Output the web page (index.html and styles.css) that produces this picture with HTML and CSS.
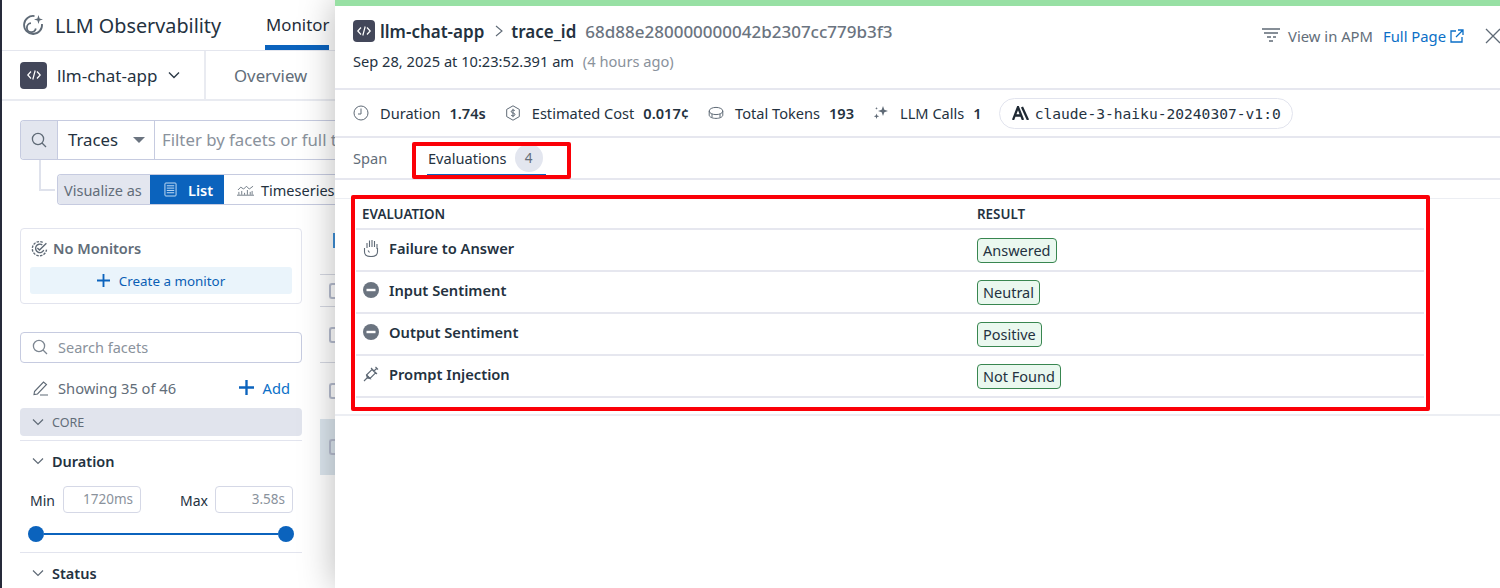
FILE: index.html
```html
<!DOCTYPE html>
<html lang="en">
<head>
<meta charset="utf-8">
<title>LLM Observability</title>
<link rel="stylesheet" href="styles.css">
</head>
<body>
<div class="page">
  <div class="app">
    <header class="top">
      <svg class="i-logo" viewBox="0 0 22 22" fill="none" stroke="#5f6a76" stroke-width="1.8"><path d="M12.500 2.100A9 9 0 1 0 20 10"/><path d="M9 9.200a4.500 4.500 0 1 0 4.800 5.300" stroke-width="1.800"/><path d="M16.500 1l1.100 3.400L21 5.500l-3.400 1.100L16.500 10l-1.100-3.400L12 5.500l3.400-1.100z" fill="#5f6a76" stroke="none"/></svg>
      <span class="top-title">LLM Observability</span>
      <span class="top-tab">Monitor</span>
    </header>
    <div class="appbar">
      <div class="app-pick">
        <span class="code-badge big"><svg viewBox="0 0 16 16" fill="none" stroke="#fff" stroke-width="1.2"><path d="M5 4.500L1.800 8 5 11.500M11 4.500L14.200 8 11 11.500M9.200 3.500L6.800 12.500"/></svg></span>
        <span class="app-name">llm-chat-app</span>
        <svg class="i-chev" viewBox="0 0 12 8" fill="none" stroke="#2c3a47" stroke-width="1.4"><path d="M1 1.500l5 5 5-5"/></svg>
      </div>
      <span class="overview">Overview</span>
    </div>
    <section class="query">
      <div class="searchbar">
        <span class="mag-cell"><svg class="i-mag" viewBox="0 0 16 16" fill="none" stroke="#5f6a76" stroke-width="1.3"><circle cx="7" cy="7" r="5.600"/><path d="M11 11l4 4"/></svg></span>
        <span class="traces">Traces<i class="caret"></i></span>
        <span class="filter">Filter by facets or full text</span>
      </div>
      <div class="viz-row">
        <i class="elbow"></i>
        <div class="viz">
          <span class="viz-label">Visualize as</span>
          <span class="viz-list"><svg class="i-list" viewBox="0 0 14 16" fill="none" stroke="#cfe4f7" stroke-width="1"><rect x="1" y="1" width="12" height="14" rx="1"/><path d="M3 4h8M3 6.500h8M3 9h8M3 11.500h8"/></svg>List</span>
          <span class="viz-ts"><svg class="i-ts" viewBox="0 0 18 12" fill="none" stroke="#5f6a76" stroke-width=".9"><path d="M0 11.500h18M1 6l3-3 3 2 3-3 3 3 4-3"/><path d="M2 11V8M5 11V7M8 11V9M11 11V6M14 11V8M16 11V7"/></svg>Timeseries</span>
        </div>
      </div>
    </section>
    <div class="work">
      <aside class="side">
        <div class="monitors">
          <div class="mon-title"><svg class="i-target" viewBox="0 0 16 16" fill="none" stroke="#5f6a76" stroke-width="1.3"><path d="M11 2.200A6.700 6.700 0 1 0 14.600 9" stroke-dasharray="2.400 1.100"/><path d="M10.600 4.600A4 4 0 1 0 12 9.500"/><path d="M6 7.500l2 2L14.500 3"/></svg>No Monitors</div>
          <div class="mon-btn"><svg class="i-plus" viewBox="0 0 14 14" stroke="#0b63bd" stroke-width="2"><path d="M7 0v14M0 7h14"/></svg>Create a monitor</div>
        </div>
        <div class="facet-search"><svg class="i-mag" viewBox="0 0 16 16" fill="none" stroke="#7d8691" stroke-width="1.3"><circle cx="7" cy="7" r="5.600"/><path d="M11 11l4 4"/></svg>Search facets</div>
        <div class="showing">
          <span class="showing-l"><svg class="i-pen" viewBox="0 0 16 16" fill="none" stroke="#5f6a76" stroke-width="1.1"><path d="M1.500 11.500L10.500 2l3 2.500-9 9.500-3.500.5zM7 15h8"/></svg>Showing 35 of 46</span>
          <span class="add"><svg class="i-plus" viewBox="0 0 14 14" stroke="#0b63bd" stroke-width="2.2"><path d="M7 0v14M0 7h14"/></svg>Add</span>
        </div>
        <div class="core"><svg class="i-down" viewBox="0 0 12 8" fill="none" stroke="#5f6a76" stroke-width="1.2"><path d="M1 1.500l5 5 5-5"/></svg>CORE</div>
        <div class="facet">
          <div class="facet-h"><svg class="i-down" viewBox="0 0 12 8" fill="none" stroke="#5f6a76" stroke-width="1.2"><path d="M1 1.500l5 5 5-5"/></svg>Duration</div>
          <div class="range">
            <span class="range-l">Min</span><span class="range-in">1720ms</span>
            <span class="range-l max">Max</span><span class="range-in">3.58s</span>
          </div>
          <div class="slider"><i class="thumb"></i><i class="track"></i><i class="thumb"></i></div>
        </div>
        <div class="facet status">
          <div class="facet-h"><svg class="i-down" viewBox="0 0 12 8" fill="none" stroke="#5f6a76" stroke-width="1.2"><path d="M1 1.500l5 5 5-5"/></svg>Status</div>
        </div>
      </aside>
      <div class="peek">
        <i class="peek-blue"></i>
        <div class="peek-row r1"><i class="box"></i></div>
        <div class="peek-row r2"><i class="box"></i></div>
        <div class="peek-row r3"><i class="box"></i></div>
        <div class="peek-row r4"><i class="box"></i></div>
      </div>
    </div>
  </div>

  <main class="panel">
    <div class="panel-head">
      <div class="head-main">
        <div class="crumbs">
          <span class="code-badge"><svg viewBox="0 0 16 16" fill="none" stroke="#fff" stroke-width="1.2"><path d="M5 4.500L1.800 8 5 11.500M11 4.500L14.200 8 11 11.500M9.200 3.500L6.800 12.500"/></svg></span>
          <span class="crumb-name">llm-chat-app</span>
          <svg class="i-gt" viewBox="0 0 8 12" fill="none" stroke="#5f6a76" stroke-width="1.1"><path d="M1 1l6 5-6 5"/></svg>
          <span class="crumb-name">trace_id</span>
          <span class="trace-val">68d88e280000000042b2307cc779b3f3</span>
        </div>
        <div class="when">Sep 28, 2025 at 10:23:52.391 am <span class="ago">(4 hours ago)</span></div>
      </div>
      <div class="head-actions">
        <svg class="i-apm" viewBox="0 0 20 16" fill="none" stroke="#5f6a76" stroke-width="1.6"><path d="M1 1h18M3 5h14"/><path d="M6 9h4M12 9h3M8 13h4"/></svg>
        <span class="apm">View in APM</span>
        <span class="full">Full Page<svg class="i-ext" viewBox="0 0 14 14" fill="none" stroke="#0b6fc7" stroke-width="1.3"><path d="M6 2H1v11h11V8M8 1h5v5M13 1L6 8"/></svg></span>
        <svg class="i-x" viewBox="0 0 16 16" fill="none" stroke="#5f6a76" stroke-width="1.3"><path d="M1 1l14 14M15 1L1 15"/></svg>
      </div>
    </div>

    <div class="metrics">
      <span class="metric"><svg class="i-m" viewBox="0 0 16 16" fill="none" stroke="#5f6a76" stroke-width="1"><circle cx="8" cy="8" r="7"/><path d="M8 3.500V9H5"/></svg>Duration<b>1.74s</b></span>
      <span class="metric"><svg class="i-m" viewBox="0 0 16 16" fill="none" stroke="#5f6a76" stroke-width="1"><path d="M8 .8l6.300 3.600v7.200L8 15.200l-6.300-3.600V4.400z"/><path d="M10 5.800C9.500 5 7 4.800 6.300 6c-.6 1.400 1 1.800 1.800 2 1 .2 2.200.6 1.800 2-.5 1.200-3 1.200-3.800.2M8 3.800v8.400"/></svg>Estimated Cost<b>0.017¢</b></span>
      <span class="metric"><svg class="i-m" viewBox="0 0 16 16" fill="none" stroke="#5f6a76" stroke-width="1"><ellipse cx="8" cy="6" rx="6.800" ry="3.600"/><path d="M1.200 6v4c0 2 3 3.400 6.800 3.400s6.800-1.400 6.800-3.400V6M4 9v3.500M12 9v3.500"/></svg>Total Tokens<b>193</b></span>
      <span class="metric last"><svg class="i-m" viewBox="0 0 16 16" fill="#5f6a76"><path d="M10 1l1.300 3.700L15 6l-3.700 1.300L10 11 8.700 7.300 5 6l3.700-1.300zM3.500 8.500l.7 2 2 .7-2 .7-.7 2-.7-2-2-.7 2-.7zM3.500 2l.4 1 1 .4-1 .4-.4 1-.4-1-1-.4 1-.4z"/></svg>LLM Calls<b>1</b></span>
      <span class="model"><svg class="i-anth" viewBox="0 0 18 14" fill="none" stroke="#1f2933" stroke-width="2.300"><path d="M1 14L6 1l5 13M3 9.500h6M10 1l6 13"/></svg>claude-3-haiku-20240307-v1:0</span>
    </div>

    <nav class="tabs">
      <span class="tab">Span</span>
      <span class="tab-on">Evaluations<span class="count">4</span><i class="mark mark-tab"></i></span>
    </nav>

    <section class="evals">
      <i class="mark mark-table"></i>
      <div class="row row-h"><span class="c1">EVALUATION</span><span>RESULT</span></div>
      <div class="row">
        <span class="c1"><svg class="i-e" viewBox="0 0 16 18" fill="none" stroke="#5f6a76" stroke-width="1.100"><path d="M4 9V4M6.500 8V1.500M9 8V1M11.500 8V2M14 10V5M1.500 9v4C1.500 16 4.500 17.500 8 17.500s6.500-1.500 6.500-4.500V9M5 11.500l1.500 2"/></svg>Failure to Answer</span>
        <span class="tag">Answered</span>
      </div>
      <div class="row">
        <span class="c1"><svg class="i-e" viewBox="0 0 16 16"><circle cx="8" cy="8" r="8" fill="#6b7480"/><rect x="3.500" y="6.800" width="9" height="2.400" fill="#fff"/></svg>Input Sentiment</span>
        <span class="tag">Neutral</span>
      </div>
      <div class="row">
        <span class="c1"><svg class="i-e" viewBox="0 0 16 16"><circle cx="8" cy="8" r="8" fill="#6b7480"/><rect x="3.500" y="6.800" width="9" height="2.400" fill="#fff"/></svg>Output Sentiment</span>
        <span class="tag">Positive</span>
      </div>
      <div class="row">
        <span class="c1"><svg class="i-e" viewBox="0 0 16 16" fill="none" stroke="#5f6a76" stroke-width="1.100"><path d="M1 15l3.500-3.500M3.500 9L9 3.500 12.500 7 7 12.500zM8 2l6 6M11 5l3-3M12.500 1l2.500 2.500"/><path d="M3.500 9L7 12.500 4.500 12z" fill="#5f6a76"/></svg>Prompt Injection</span>
        <span class="tag">Not Found</span>
      </div>
    </section>
  </main>
</div>
</body>
</html>
```
FILE: styles.css
```css
* { box-sizing: border-box; }
html, body { margin: 0; height: 100%; overflow: hidden; }
body { font-family: "Noto Sans", sans-serif; color: #1f2d3a; background: #fff; }
svg { display: block; flex: none; }
.page { display: flex; width: 1500px; height: 588px; overflow: hidden; }

/* left application */
.app { width: 335px; flex: none; height: 588px; border-left: 2px solid #262a3a; overflow: hidden; }
.top { height: 51px; display: flex; align-items: center; border-bottom: 1px solid #e4e6ee; white-space: nowrap; }
.i-logo { width: 22px; height: 22px; margin-left: 20px; }
.top-title { font-size: 19.800px; margin-left: 11px; color: #24323f; }
.top-tab { font-size: 16.800px; margin-left: 44px; height: 50px; width: 64px; padding: 13px 0 0 1px; border-bottom: 5px solid #0b63bd; color: #1f2d3a; }
.appbar { height: 50px; display: flex; align-items: center; border-bottom: 2px solid #e9ebf1; }
.app-pick { width: 204px; height: 100%; display: flex; align-items: center; padding-left: 18px; border-right: 2px solid #e9ebf1; flex: none; }
.code-badge { width: 22px; height: 22px; border-radius: 4px; background: #43475a; display: flex; align-items: center; justify-content: center; flex: none; }
.code-badge svg { width: 16px; height: 16px; }
.code-badge.big { width: 27px; height: 27px; }
.app-name { font-size: 17px; margin-left: 10px; color: #24323f; }
.i-chev { width: 12px; height: 8px; margin-left: 11px; }
.overview { font-size: 16.800px; margin: 1px 0 0 28px; color: #626d79; }

.query { padding: 19px 0 0 18px; height: 127px; }
.searchbar { display: flex; height: 40px; border: 1px solid #c6cbe0; border-right: 0; border-radius: 4px 0 0 4px; white-space: nowrap; overflow: hidden; }
.mag-cell { width: 37px; background: #e3e6ef; display: flex; align-items: center; justify-content: center; border-right: 1px solid #c6cbe0; flex: none; }
.i-mag { width: 16px; height: 16px; }
.traces { width: 97px; flex: none; display: flex; align-items: center; padding: 0 0 2px 10px; font-size: 16.800px; border-right: 1px solid #c6cbe0; color: #24323f; }
.caret { margin: 2px 0 0 15px; border: 6px solid transparent; border-top: 6px solid #6b7480; border-bottom: 0; }
.filter { padding: 7px 0 0 7px; font-size: 16.800px; color: #8a929c; }
.viz-row { display: flex; height: 31px; margin-top: 14px; position: relative; white-space: nowrap; }
.elbow { position: absolute; left: 19px; top: -14px; width: 16px; height: 31px; border-left: 2px solid #dfe2ec; border-bottom: 2px solid #dfe2ec; }
.viz { display: flex; margin-left: 37px; flex: 1; border: 1px solid #c6cbe0; border-right: 0; border-radius: 4px 0 0 4px; overflow: hidden; font-size: 14.500px; }
.viz-label { width: 92px; flex: none; background: #e3e6ef; padding: 5px 0 0 6px; color: #626d79; }
.viz-list { width: 74px; flex: none; background: #0b63bd; color: #fff; display: flex; align-items: center; padding-left: 14px; font-weight: 600; }
.i-list { width: 13px; height: 15px; margin-right: 11px; }
.viz-ts { display: flex; align-items: center; padding-left: 13px; color: #24323f; }
.i-ts { width: 17px; height: 12px; margin-right: 7px; }

.work { display: flex; align-items: flex-start; }
.side { width: 282px; flex: none; margin-left: 18px; }
.monitors { height: 76px; border: 1px solid #e2e4ee; border-radius: 4px; padding: 8px 9px 0; }
.mon-title { display: flex; align-items: center; font-size: 14.500px; font-weight: 600; color: #626d79; height: 22px; }
.i-target { width: 17px; height: 17px; margin: 0 5px 0 1px; }
.mon-btn { height: 27px; margin-top: 8px; background: #eaf4fb; border-radius: 3px; display: flex; align-items: center; justify-content: center; font-size: 13.400px; color: #0b5fb5; }
.mon-btn .i-plus { width: 13px; height: 13px; margin-right: 9px; }
.facet-search { height: 31px; margin-top: 28px; border: 1px solid #c6cbe0; border-radius: 4px; display: flex; align-items: center; padding: 0 0 2px 11px; font-size: 14.500px; color: #8a929c; }
.facet-search .i-mag { margin-right: 10px; }
.showing { display: flex; justify-content: space-between; align-items: center; height: 25px; margin-top: 12px; padding: 0 12px 0 13px; font-size: 14.700px; color: #626d79; }
.showing-l { display: flex; align-items: center; }
.i-pen { width: 16px; height: 16px; margin-right: 9px; }
.add { display: flex; align-items: center; color: #0b6fc7; }
.add .i-plus { width: 15px; height: 15px; margin-right: 9px; }
.core { height: 28px; margin-top: 8px; border-radius: 4px; background: #e1e4ed; display: flex; align-items: center; padding-left: 12px; font-size: 12.500px; color: #626d79; }
.i-down { width: 12px; height: 8px; margin-right: 8px; }
.facet { margin-top: 4px; border-top: 1px solid #e2e4ee; height: 112px; padding-top: 8px; }
.facet-h { display: flex; align-items: center; height: 24px; padding-left: 12px; font-size: 14.500px; font-weight: 600; color: #24323f; }
.range { display: flex; align-items: center; margin-top: 13px; padding-left: 10px; font-size: 14px; color: #24323f; }
.range-l { width: 33px; padding-top: 2px; }
.range-l.max { width: 35px; margin-left: 39px; }
.range-in { width: 78px; height: 27px; border: 1px solid #d5d8e6; border-radius: 4px; text-align: right; padding: 3px 7px 0 0; font-size: 13.500px; color: #8a929c; }
.slider { display: flex; align-items: center; margin: 13px 8px 0; }
.thumb { width: 16px; height: 16px; border-radius: 50%; background: #0b63bd; flex: none; }
.track { flex: 1; height: 2px; background: #0b63bd; }
.facet.status { margin-top: 0; }

.peek { margin-left: 18px; width: 15px; flex: none; position: relative; height: 280px; }
.peek-blue { display: block; position: absolute; left: 13px; top: 5px; width: 3px; height: 15px; background: #3f8fd6; }
.peek-row { border-top: 1px solid #d5d8e2; display: flex; align-items: center; padding-left: 9px; }
.r1 { margin-top: 46px; height: 32px; }
.r2 { height: 56px; }
.r3 { height: 57px; }
.r4 { height: 56px; background: #dce6ee; border-top: 0; }
.box { width: 14px; height: 16px; border: 2px solid #b7bdcf; border-right: 0; border-radius: 3px 0 0 3px; flex: none; }

/* trace panel */
.panel { flex: 1; min-width: 0; height: 588px; background: #fff; border-top: 6px solid #98e0a4; box-shadow: 0 0 34px rgba(0, 0, 0, .28); position: relative; z-index: 2; }
.panel-head { height: 84px; display: flex; justify-content: space-between; border-bottom: 2px solid #e6e7ef; padding: 14px 0 0 18px; }
.crumbs { display: flex; align-items: center; height: 22px; white-space: nowrap; }
.crumb-name { font-size: 17px; font-weight: 600; color: #24323f; margin-left: 5px; }
.i-gt { width: 8px; height: 12px; margin: 0 3px 0 11px; }
.i-gt + .crumb-name { margin-left: 5px; }
.trace-val { font-size: 17px; font-weight: 500; color: #6b7480; margin-left: 9px; }
.when { font-size: 14.650px; margin-top: 9px; color: #24323f; }
.ago { color: #8a929c; margin-left: 5px; }
.head-actions { display: flex; align-items: center; height: 32px; white-space: nowrap; font-size: 14.800px; overflow: hidden; }
.i-apm { width: 20px; height: 16px; margin-right: 7px; }
.apm { color: #626d79; }
.full { display: flex; align-items: center; color: #0b6fc7; margin-left: 10px; }
.i-ext { width: 14px; height: 14px; margin-left: 4px; }
.i-x { width: 16px; height: 16px; margin: 0 -1px 0 21px; }

.metrics { height: 48px; display: flex; align-items: center; border-bottom: 2px solid #e6e7ef; padding-left: 18px; font-size: 14.600px; white-space: nowrap; color: #24323f; }
.metric { display: flex; align-items: center; margin-right: 19px; }
.metric.last { margin-right: 17px; }
.metric b { font-weight: 600; margin-left: 9px; }
.i-m { width: 16px; height: 16px; margin-right: 11px; }
.model { display: flex; align-items: center; height: 31px; border: 1px solid #e2e4ee; border-radius: 16px; padding: 0 11px 0 12px; font-family: "DejaVu Sans Mono", monospace; font-size: 14.600px; color: #24323f; }
.i-anth { width: 18px; height: 14px; margin-right: 5px; }

.tabs { height: 42px; display: flex; border-bottom: 2px solid #e6e7ef; padding-left: 18px; font-size: 14.600px; }
.tab { color: #626d79; padding-top: 10px; width: 74px; }
.tab-on { position: relative; height: 38px; width: 119px; padding: 10px 0 0 1px; border-bottom: 2px solid #0b63bd; color: #24323f; display: flex; align-items: flex-start; }
.count { width: 28px; height: 28px; margin: -4px 0 0 8px; border-radius: 50%; background: #e3e6ef; color: #626d79; font-size: 13.500px; display: flex; align-items: center; justify-content: center; }
.mark { position: absolute; border: 4px solid #fb0007; border-radius: 2px; pointer-events: none; }
.mark-tab { left: -15px; top: 4px; width: 159px; height: 37px; }

.evals { position: relative; margin-top: 18px; height: 218px; border-top: 1px solid #eceef3; border-bottom: 2px solid #eceef3; padding: 0 76px 0 21px; }
.mark-table { left: 16px; top: -4px; width: 1079px; height: 216px; }
.row { display: flex; align-items: flex-start; height: 42px; border-bottom: 2px solid #e6e7ef; padding: 6px 0 0 6px; font-size: 14.700px; font-weight: 600; color: #24323f; }
.row-h { height: 31px; font-size: 13.400px; }
.c1 { width: 615px; flex: none; display: flex; align-items: center; }
.row:not(.row-h) .c1 { height: 24px; }
.i-e { width: 16px; height: 18px; margin: 0 10px 0 1px; }
.tag { height: 25px; margin-top: 2px; padding: 0 5px; border: 1px solid #388650; border-radius: 4px; background: #eaf8ef; font-size: 14.500px; font-weight: 400; line-height: 23px; color: #24323f; }
```
